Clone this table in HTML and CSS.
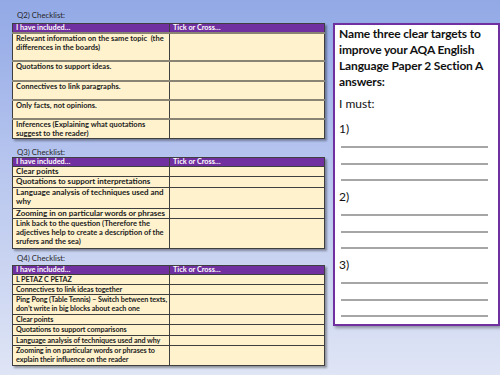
FILE: index.html
```html
<!DOCTYPE html>
<html>
<head>
<meta charset="utf-8">
<link rel="stylesheet" href="styles.css">
</head>
<body>
<div class="slide">
  <div class="left">
    <section class="sec sec1">
      <div class="label">Q2) Checklist:</div>
      <table class="check t1">
        <tr class="head"><td class="c1">I have included…</td><td class="c2">Tick or Cross…</td></tr>
        <tr style="height:28px"><td>Relevant information on the same topic&nbsp; (the differences in the boards)</td><td></td></tr>
        <tr style="height:20px"><td>Quotations to support ideas.</td><td></td></tr>
        <tr style="height:19px"><td>Connectives to link paragraphs.</td><td></td></tr>
        <tr style="height:19px"><td>Only facts, not opinions.</td><td></td></tr>
        <tr style="height:18px"><td>Inferences (Explaining what quotations suggest to the reader)</td><td></td></tr>
      </table>
    </section>
    <section class="sec sec2">
      <div class="label">Q3) Checklist:</div>
      <table class="check t2">
        <tr class="head"><td class="c1">I have included…</td><td class="c2">Tick or Cross…</td></tr>
        <tr><td class="big">Clear points</td><td></td></tr>
        <tr style="height:11px"><td class="big">Quotations to support interpretations</td><td></td></tr>
        <tr style="height:21px"><td class="big">Language analysis of techniques used and why</td><td></td></tr>
        <tr><td class="big">Zooming in on particular words or phrases</td><td></td></tr>
        <tr style="height:30px"><td>Link back to the question (Therefore the adjectives help to create a description of the srufers and the sea)</td><td></td></tr>
      </table>
    </section>
    <section class="sec sec3">
      <div class="label">Q4) Checklist:</div>
      <table class="check t3">
        <tr class="head"><td class="c1">I have included…</td><td class="c2">Tick or Cross…</td></tr>
        <tr><td>L PETAZ C PETAZ</td><td></td></tr>
        <tr><td>Connectives to link ideas together</td><td></td></tr>
        <tr style="height:20px"><td>Ping Pong (Table Tennis) – Switch between texts, don’t write in big blocks about each one</td><td></td></tr>
        <tr><td>Clear points</td><td></td></tr>
        <tr style="height:11px"><td>Quotations to support comparisons</td><td></td></tr>
        <tr><td>Language analysis of techniques used and why</td><td></td></tr>
        <tr style="height:20px"><td>Zooming in on particular words or phrases to explain their influence on the reader</td><td></td></tr>
      </table>
    </section>
  </div>
  <div class="targets">
    <p class="title">Name three clear targets to improve your AQA English Language Paper 2 Section A answers:</p>
    <p class="must">I must:</p>
    <div class="target">
      <p class="num">1)</p>
      <div class="rule"></div><div class="rule"></div><div class="rule"></div>
    </div>
    <div class="target">
      <p class="num">2)</p>
      <div class="rule"></div><div class="rule"></div><div class="rule"></div>
    </div>
    <div class="target">
      <p class="num">3)</p>
      <div class="rule"></div><div class="rule"></div><div class="rule"></div>
    </div>
  </div>
</div>
</body>
</html>
```

FILE: styles.css
```css
html, body {
  margin: 0;
  padding: 0;
}
body {
  width: 500px;
  height: 375px;
  overflow: hidden;
  background: linear-gradient(180deg, #92a9e6 0%, #b4c3ee 40%, #dfe5f5 100%);
  font-family: "Lato", "Open Sans", sans-serif;
}
.slide {
  display: flex;
  align-items: flex-start;
  padding-left: 12px;
}
.left {
  width: 313px;
  display: flex;
  flex-direction: column;
}
.label {
  font-size: 7.8px;
  line-height: 10px;
  color: #262626;
  padding-left: 5px;
}
.sec1 { margin-top: 10px; }
.sec1 .label { margin-bottom: 3px; }
.sec2 { margin-top: 8px; }
.sec3 { margin-top: 4px; }
.sec3 .label { margin-bottom: 2px; }
.check {
  width: 313px;
  border-collapse: collapse;
  table-layout: fixed;
  background: #fff2cc;
  box-shadow: 2px 2px 2px rgba(0,0,0,0.35);
}
.check tr { height: 10px; }
.check td {
  border: 1px solid #3f3f3f;
  padding: 0 1px 0 3px;
  vertical-align: top;
  font-size: 7.5px;
  line-height: 9px;
  font-weight: 700;
  color: #222;
}
.check td:first-child { width: 152px; }
.t1 tr:not(.head) td { border-top: 2px solid #8a8474; }
.check td.big { font-size: 8px; }
.t3 td { font-size: 7.2px; letter-spacing: -0.08px; }
.check .head { height: 9px; }
.check .head td {
  background: #7030a0;
  color: #fff;
  line-height: 8px;
  font-size: 7.3px;
  letter-spacing: 0;
}
.targets {
  margin-left: 8px;
  margin-top: 23px;
  width: 156px;
  height: 298px;
  background: #fff;
  border: 2px solid #7030a0;
  box-shadow: 2px 2px 3px rgba(0,0,0,0.35);
  padding: 1px 4px 0 4px;
  box-sizing: content-box;
  color: #111;
}
.targets p { margin: 0; }
.title {
  font-weight: 700;
  font-size: 12px;
  letter-spacing: -0.15px;
  line-height: 16px;
}
.must {
  margin-top: 6px !important;
  font-size: 12px;
  line-height: 16px;
}
.num {
  font-size: 12px;
  line-height: 16px;
}
.target { margin-top: 9px; }
.target + .target { margin-top: 8px; }
.rule {
  height: 2px;
  background: #a6a6a6;
  margin: 14.5px 6px 0 2px;
}
.rule:first-of-type { margin-top: 9px; }
```
